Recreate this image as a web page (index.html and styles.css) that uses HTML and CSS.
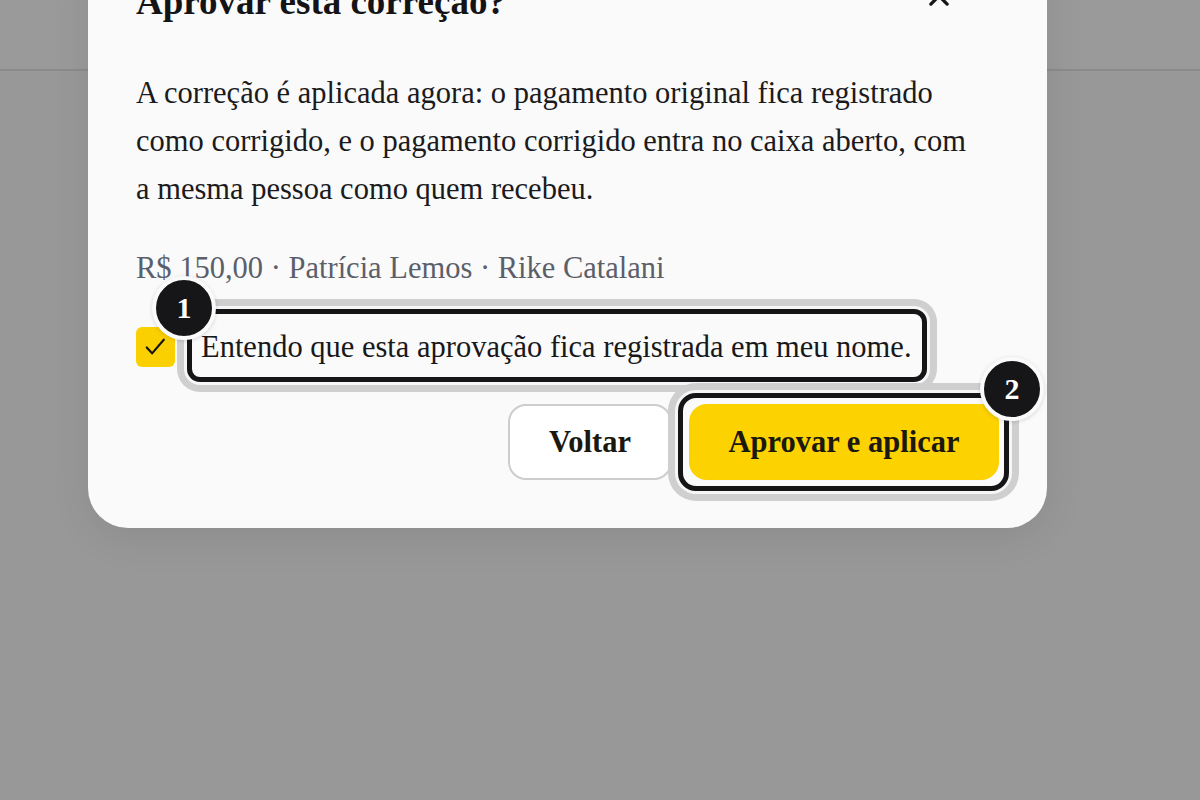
FILE: index.html
```html
<!DOCTYPE html>
<html lang="pt-BR">
<head>
<meta charset="utf-8">
<title>Aprovar correção</title>
<link rel="stylesheet" href="styles.css">
</head>
<body>
<header class="page-header"></header>
<div class="overlay">
  <div class="modal" role="dialog" aria-labelledby="modal-title">
    <div class="modal-head">
      <h2 class="modal-title" id="modal-title">Aprovar esta correção?</h2>
      <button class="close" type="button" aria-label="Fechar">
        <svg viewBox="0 0 24 24" width="30" height="30" aria-hidden="true"><path d="M5.5 5.5 L18.5 18.5 M18.5 5.5 L5.5 18.5" fill="none" stroke="#151518" stroke-width="2.6" stroke-linecap="round"/></svg>
      </button>
    </div>
    <p class="modal-text">A correção é aplicada agora: o pagamento original fica registrado como corrigido, e o pagamento corrigido entra no caixa aberto, com a mesma pessoa como quem recebeu.</p>
    <p class="meta">R$ 150,00 · Patrícia Lemos · Rike Catalani</p>
    <label class="confirm">
      <span class="checkbox" aria-checked="true">
        <svg viewBox="0 0 40 40" width="40" height="40" aria-hidden="true"><path d="M11 20.5 L16.5 26.5 L28.5 12.5" fill="none" stroke="#17140c" stroke-width="2.2" stroke-linecap="round" stroke-linejoin="round"/></svg>
      </span>
      <span class="confirm-text hl hl-label">Entendo que esta aprovação fica registrada em meu nome.<span class="badge badge-label">1</span></span>
    </label>
    <div class="actions">
      <button class="btn btn-secondary" type="button">Voltar</button>
      <button class="btn btn-primary hl hl-button" type="button">Aprovar e aplicar<span class="badge badge-button">2</span></button>
    </div>
  </div>
</div>
</body>
</html>
```

FILE: styles.css
```css
* { box-sizing: border-box; }

html, body {
  margin: 0;
  height: 100%;
}

body {
  background: #989898;
  font-family: "Liberation Serif", "DejaVu Serif", serif;
  color: #1b1b1d;
  overflow: hidden;
}

.page-header {
  height: 71px;
  border-bottom: 2px solid #8b8b8b;
  background: #9a9a9a;
}

.overlay {
  position: absolute;
  inset: 0;
}

.modal {
  position: absolute;
  left: 88px;
  top: -68px;
  width: 959px;
  background: #fafafa;
  border-radius: 40px;
  padding: 48px 48px 48px 48px;
  box-shadow: 0 10px 40px rgba(0, 0, 0, 0.08);
}

.modal-head {
  display: flex;
  align-items: flex-start;
  justify-content: space-between;
  margin-bottom: 45px;
}

.modal-title {
  margin: 0;
  font-size: 37px;
  line-height: 44px;
  font-weight: 700;
  color: #141416;
}

.close {
  width: 40px;
  height: 40px;
  margin: -4px 40px 0 0;
  padding: 0;
  border: 0;
  background: transparent;
  display: flex;
  align-items: center;
  justify-content: center;
}

.modal-text {
  margin: 0;
  max-width: 840px;
  font-size: 30.5px;
  line-height: 48px;
  color: #1b1b1d;
}

.meta {
  margin: 35px 0 0;
  font-size: 30.5px;
  line-height: 40px;
  color: #5b5f6a;
}

.confirm {
  margin-top: 39px;
  display: flex;
  align-items: center;
  gap: 26px;
}

.checkbox {
  width: 39px;
  height: 40px;
  flex: none;
  border-radius: 6px;
  background: #fbd000;
  display: flex;
  align-items: center;
  justify-content: center;
}

.confirm-text {
  font-size: 30.5px;
  line-height: 40px;
  color: #18181a;
}

.actions {
  margin-top: 37px;
  display: flex;
  justify-content: flex-end;
  gap: 17px;
}

.btn {
  height: 76px;
  border-radius: 18px;
  font-family: inherit;
  font-size: 30.5px;
  font-weight: 700;
  color: #1b1810;
  padding: 0 20px;
  cursor: pointer;
}

.btn-secondary {
  width: 164px;
  background: #ffffff;
  border: 2px solid #cdcdcd;
}

.btn-primary {
  width: 310px;
  background: #fcd200;
  border: 0;
}

/* annotation highlights */
.hl {
  position: relative;
}

.hl::before {
  content: "";
  position: absolute;
  border: 5px solid #151518;
  box-shadow: 0 0 0 3px #f6f6f6, 0 0 0 10px #cfcfcf;
  pointer-events: none;
}

.hl-label::before {
  inset: -18px -15px -15px -14px;
  border-radius: 13px;
}

.hl-button::before {
  inset: -11px -10px -11px -11px;
  border-radius: 18px;
}

.badge {
  position: absolute;
  width: 64px;
  height: 64px;
  border-radius: 50%;
  background: #161619;
  border: 4px solid #fafafa;
  color: #ffffff;
  font-family: "Liberation Serif", "DejaVu Serif", serif;
  font-size: 30px;
  font-weight: 700;
  line-height: 56px;
  text-align: center;
  box-shadow: 0 1px 4px rgba(0, 0, 0, 0.15);
}

.badge-label {
  left: -49px;
  top: -51px;
}

.badge-button {
  right: -45px;
  top: -47px;
}
```
